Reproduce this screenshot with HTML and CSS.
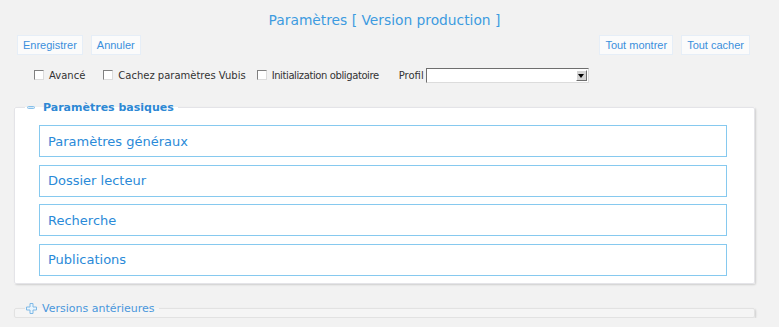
FILE: index.html
```html
<!DOCTYPE html>
<html lang="fr">
<head>
    <meta charset="UTF-8">
    <title>Paramètres</title>
    <link rel="stylesheet" href="styles.css">
</head>
<body>
    <div class="page">
        <h1 class="title">Paramètres [ Version production ]</h1>

        <div class="button-bar">
            <div class="button-group">
                <button class="btn">Enregistrer</button>
                <button class="btn">Annuler</button>
            </div>
            <div class="button-group">
                <button class="btn">Tout montrer</button>
                <button class="btn">Tout cacher</button>
            </div>
        </div>

        <div class="options">
            <label class="option option-advanced"><input type="checkbox" class="check"> Avancé</label>
            <label class="option option-hide"><input type="checkbox" class="check"> Cachez paramètres Vubis</label>
            <label class="option option-init"><input type="checkbox" class="check"> <span class="tight">Initialization obligatoire</span></label>
            <label class="option profile">Profil
                <span class="select-wrap">
                    <select class="select"><option></option></select>
                    <span class="select-arrow"></span>
                </span>
            </label>
        </div>

        <!-- Basic parameters -->
        <fieldset class="panel">
            <legend class="panel-title">
                <span class="icon-minus"></span>
                Paramètres basiques
            </legend>
            <div class="section-list">
                <div class="section">Paramètres généraux</div>
                <div class="section">Dossier lecteur</div>
                <div class="section">Recherche</div>
                <div class="section">Publications</div>
            </div>
        </fieldset>

        <!-- Older versions (collapsed) -->
        <fieldset class="panel collapsed">
            <legend class="panel-title light">
                <svg class="icon-plus" width="11" height="11" viewBox="0 0 11 11">
                    <path d="M4 0.5 H7 V4 H10.5 V7 H7 V10.5 H4 V7 H0.5 V4 H4 Z" fill="#eaf5fd" stroke="#7fb9e6" stroke-width="1"/>
                </svg>
                Versions antérieures
            </legend>
        </fieldset>
    </div>
</body>
</html>
```

FILE: styles.css
```css
body {
    margin: 0;
    background-color: #f2f2f2;
    font-family: "DejaVu Sans", Verdana, sans-serif;
}
.page {
    width: 741px;
    margin-left: 14px;
}
.title {
    margin: 0;
    padding-top: 11px;
    font-size: 13.8px;
    font-weight: normal;
    line-height: 18px;
    text-align: center;
    color: #3d9be0;
}
.button-bar {
    display: flex;
    justify-content: space-between;
    padding: 6px 5px 0 3px;
}
.button-group {
    display: flex;
    gap: 8px;
}
.btn {
    height: 20px;
    padding: 0 5px;
    font-family: "Liberation Sans", Arial, sans-serif;
    font-size: 11px;
    color: #3a8fdc;
    background-color: #fbfbfb;
    border: 1px solid #e6eef7;
    cursor: pointer;
}
.options {
    display: flex;
    align-items: center;
    height: 16px;
    margin-top: 12px;
    padding-left: 20px;
    font-size: 10px;
    color: #333;
}
.option {
    display: flex;
    align-items: center;
    gap: 5px;
}
.option-advanced {
    margin-right: 18px;
}
.option-hide {
    margin-right: 11px;
}
.option-init {
    margin-right: 20px;
}
.tight {
    letter-spacing: -0.4px;
}
.check {
    appearance: none;
    width: 10px;
    height: 10px;
    margin: 0;
    background-color: #fff;
    border: 1px solid;
    border-color: #808080 #dcdcdc #dcdcdc #808080;
}
.profile {
    gap: 2px;
}
.select-wrap {
    position: relative;
    display: block;
}
.select {
    appearance: none;
    display: block;
    width: 163px;
    height: 15px;
    margin: 0;
    background-color: #fff;
    border: 1px solid;
    border-color: #6e6e6e #dcdcdc #dcdcdc #6e6e6e;
}
.select-arrow {
    position: absolute;
    top: 2px;
    right: 2px;
    width: 11px;
    height: 11px;
    background-color: #d4d4d4;
    border: 1px solid;
    border-color: #fff #6e6e6e #6e6e6e #fff;
    box-sizing: border-box;
}
.select-arrow::after {
    content: "";
    position: absolute;
    top: 3px;
    left: 1px;
    border-left: 3.5px solid transparent;
    border-right: 3.5px solid transparent;
    border-top: 4px solid #000;
}
.panel {
    margin: 18px 0 0 0;
    padding: 11px 27px 7px 10px;
    background-color: #fff;
    border: 1px solid #e4e4e8;
    border-radius: 2px;
    box-shadow: 1px 1px 2px rgba(0, 0, 0, 0.15);
}
.panel-title {
    display: flex;
    align-items: center;
    gap: 8px;
    padding: 0 4px 0 2px;
    font-size: 11px;
    font-weight: bold;
    line-height: 13px;
    color: #2d88d4;
}
.panel-title.light {
    font-weight: normal;
    color: #4a97dc;
    gap: 5px;
    padding-left: 1px;
}
.icon-minus {
    display: block;
    width: 8px;
    height: 3px;
    background-color: #d8ebfa;
    border: 1px solid #86c0ea;
    border-radius: 2px;
    box-sizing: border-box;
}
.icon-plus {
    display: block;
}
.section-list {
    display: flex;
    flex-direction: column;
    gap: 7.5px;
    padding-left: 14px;
}
.section {
    display: flex;
    align-items: center;
    height: 32px;
    padding-left: 8px;
    font-size: 13px;
    color: #2a8ad8;
    border: 1px solid #86c9ef;
    box-sizing: border-box;
}
.panel.collapsed {
    margin-top: 18px;
    padding: 0 0 2px 10px;
    background-color: #f5f5f5;
    border-color: #e2e2e2;
}
```
